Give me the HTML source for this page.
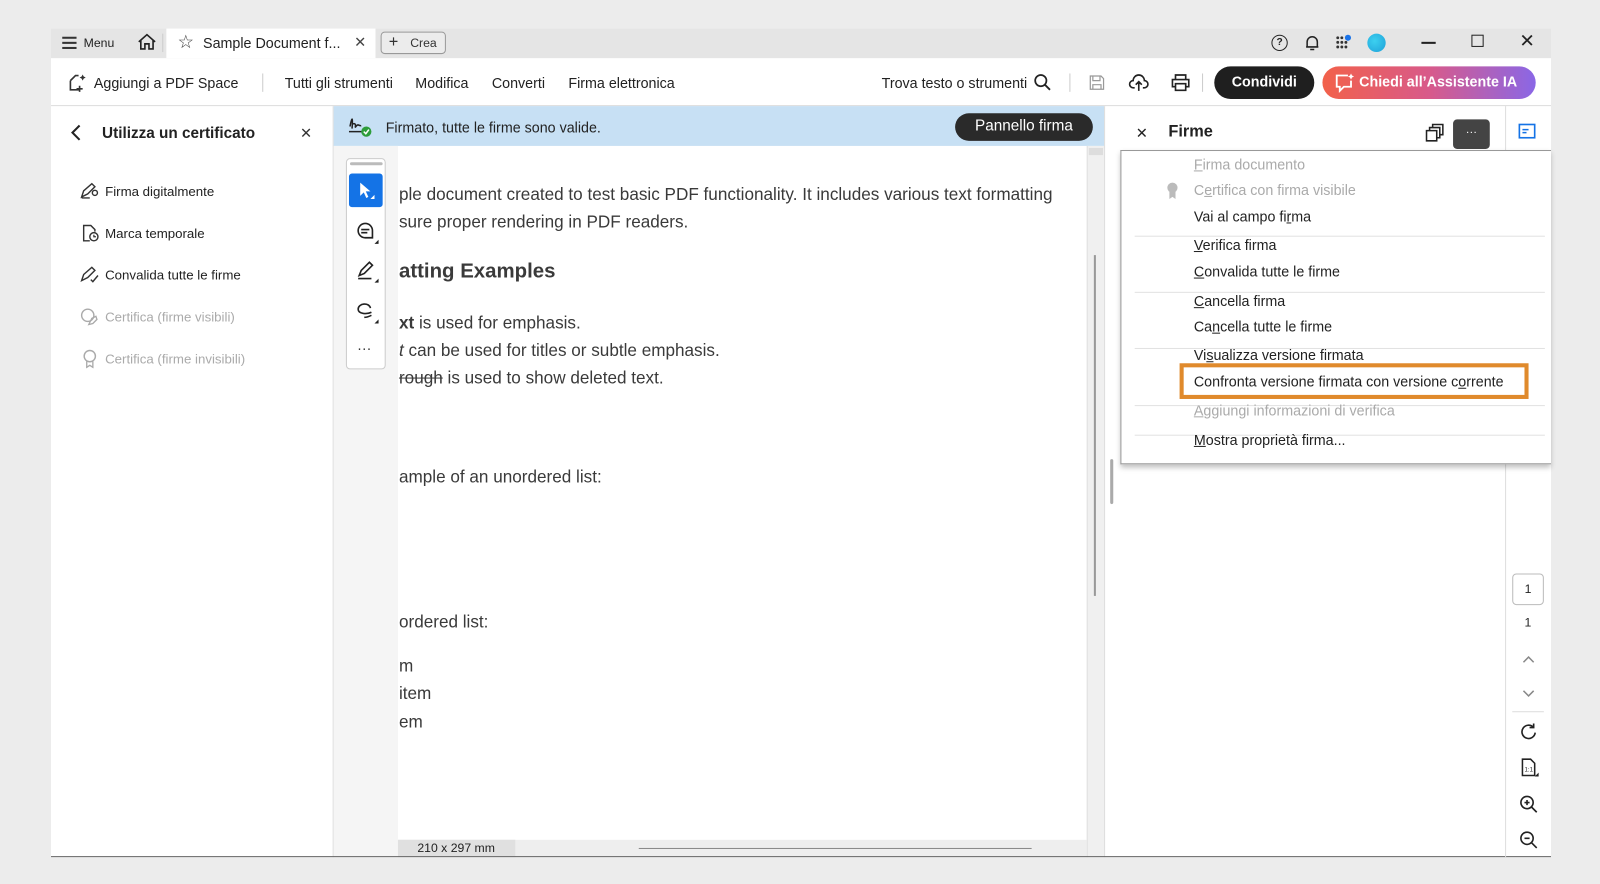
<!DOCTYPE html>
<html><head><meta charset="utf-8"><style>
*{box-sizing:border-box;margin:0;padding:0}
body{width:1600px;height:884px;background:#ececec;font-family:"Liberation Sans",sans-serif;color:#222;position:relative;overflow:hidden}
#root{position:absolute;left:0;top:0;width:1568px;height:866px;transform:scale(1.0204);transform-origin:0 0}
.a{position:absolute}
.t{position:absolute;white-space:nowrap}
svg{position:absolute}
.dt{position:absolute;white-space:nowrap;font-size:16.8px;color:#3a3a3a}
.mi{position:absolute;left:1170px;font-size:14px;color:#222;white-space:nowrap}
.mi.g{color:#aaa}
.sep{position:absolute;left:1112px;width:402px;height:1px;background:#e2e2e2}
.lp{position:absolute;left:103px;font-size:13px;color:#222;white-space:nowrap}
.lp.g{color:#aaa}
</style></head><body><div id="root">
<div class="a" style="left:50px;top:28px;width:1470px;height:812px;background:#fff"></div>
<div class="a" style="left:50px;top:28px;width:1470px;height:29px;background:#e5e5e5"></div>
<div class="a" style="left:163px;top:28px;width:205px;height:29px;background:#fff"></div>
<div class="a" style="left:61px;top:36px;width:14px;height:2px;background:#333;box-shadow:0 5px 0 #333,0 10px 0 #333"></div>
<div class="t" style="left:82px;top:35px;font-size:12px">Menu</div>
<svg style="left:134px;top:32px" width="20" height="18" viewBox="0 0 20 18"><path d="M2 9 L10 2 L18 9 M4 7 V16 H8 V11 H12 V16 H16 V7" fill="none" stroke="#222" stroke-width="1.6"/></svg>
<div class="a" style="left:159px;top:33px;width:1px;height:18px;background:#ccc"></div>
<div class="t" style="left:174px;top:31px;font-size:18px;color:#444">☆</div>
<div class="t" style="left:199px;top:34px;font-size:14px">Sample Document f...</div>
<div class="t" style="left:347px;top:33px;font-size:14px;color:#444">✕</div>
<div class="a" style="left:373px;top:31px;width:64px;height:22px;border:1px solid #999;border-radius:4px;background:#ececec"></div>
<div class="t" style="left:381px;top:33px;font-size:16px;color:#333">+</div>
<div class="t" style="left:402px;top:35px;font-size:12px;color:#333">Crea</div>
<div class="a" style="left:1246px;top:34px;width:16px;height:16px;border:1.6px solid #222;border-radius:50%;font-size:10px;font-weight:bold;text-align:center;line-height:13px">?</div>
<svg style="left:1277px;top:33px" width="18" height="18" viewBox="0 0 18 18"><path d="M4 13 V8 a5 5 0 0 1 10 0 V13 H3 H15 M7 15.5 h4" fill="none" stroke="#222" stroke-width="1.5"/></svg>
<svg style="left:1308px;top:33px" width="18" height="18" viewBox="0 0 18 18"><g fill="#333"><circle cx="3" cy="4" r="1.4"/><circle cx="7" cy="4" r="1.4"/><circle cx="3" cy="8.5" r="1.4"/><circle cx="7" cy="8.5" r="1.4"/><circle cx="11" cy="8.5" r="1.4"/><circle cx="3" cy="13" r="1.4"/><circle cx="7" cy="13" r="1.4"/><circle cx="11" cy="13" r="1.4"/></g><circle cx="13" cy="4" r="3" fill="#1a73e8"/></svg>
<div class="a" style="left:1340px;top:33px;width:18px;height:18px;border-radius:50%;background:radial-gradient(circle at 40% 40%,#3cd0f0,#1fa0d8)"></div>
<div class="a" style="left:1393px;top:41px;width:14px;height:2px;background:#222"></div>
<div class="a" style="left:1442px;top:34px;width:12px;height:12px;border:1.5px solid #222"></div>
<div class="t" style="left:1489px;top:30px;font-size:18px;color:#222">✕</div>
<div class="a" style="left:50px;top:103px;width:1470px;height:1px;background:#ddd"></div>
<svg style="left:66px;top:71px" width="20" height="20" viewBox="0 0 20 20"><path d="M3 8 V17 H12 M3 8 L8 3 H11 M12 13 v6 M9 16 h6" fill="none" stroke="#333" stroke-width="1.6"/><path d="M15 2 l1 2 2 1 -2 1 -1 2 -1-2 -2-1 2-1z" fill="#333"/></svg>
<div class="t" style="left:92px;top:73px;font-size:14px">Aggiungi a PDF Space</div>
<div class="a" style="left:257px;top:72px;width:1px;height:18px;background:#ccc"></div>
<div class="t" style="left:279px;top:73px;font-size:14px">Tutti gli strumenti</div>
<div class="t" style="left:407px;top:73px;font-size:14px">Modifica</div>
<div class="t" style="left:482px;top:73px;font-size:14px">Converti</div>
<div class="t" style="left:557px;top:73px;font-size:14px">Firma elettronica</div>
<div class="t" style="left:864px;top:73px;font-size:14px">Trova testo o strumenti</div>
<svg style="left:1013px;top:72px" width="18" height="18" viewBox="0 0 18 18"><circle cx="7" cy="7" r="5.5" fill="none" stroke="#222" stroke-width="1.7"/><path d="M11 11 L16 16" stroke="#222" stroke-width="1.8"/></svg>
<div class="a" style="left:1048px;top:72px;width:1px;height:18px;background:#ccc"></div>
<svg style="left:1067px;top:73px" width="16" height="16" viewBox="0 0 16 16"><path d="M1.5 1.5 H12 L14.5 4 V14.5 H1.5Z M4 1.5 V6 H11 V1.5 M4 14.5 V10 H12 V14.5" fill="none" stroke="#999" stroke-width="1.2"/></svg>
<svg style="left:1106px;top:71px" width="20" height="20" viewBox="0 0 20 20"><path d="M6 15 H4.5 a3.5 3.5 0 0 1 0-7 a5.5 5.5 0 0 1 11 0 a3.5 3.5 0 0 1 0 7 H14 M10 18 V9 M7 12 L10 9 L13 12" fill="none" stroke="#222" stroke-width="1.6"/></svg>
<svg style="left:1147px;top:72px" width="20" height="18" viewBox="0 0 20 18"><path d="M5 6 V1.5 H15 V6 M5 13 H2 V6 H18 V13 H15 M5 10 H15 V16.5 H5Z" fill="none" stroke="#222" stroke-width="1.6"/></svg>
<div class="a" style="left:1178px;top:72px;width:1px;height:18px;background:#ccc"></div>
<div class="a" style="left:1190px;top:65px;width:98px;height:32px;border-radius:16px;background:#1f1f1f;color:#fff;font-size:14px;font-weight:bold;text-align:center;line-height:31px">Condividi</div>
<div class="a" style="left:1296px;top:65px;width:209px;height:32px;border-radius:16px;background:linear-gradient(90deg,#f2614a,#d85a8a 50%,#8a67e6);color:#fff;font-size:14px;font-weight:bold;line-height:31px;padding-left:36px">Chiedi all’Assistente IA</div>
<svg style="left:1308px;top:71px" width="20" height="20" viewBox="0 0 20 20"><path d="M13 3 H2 V14 H5 V18 L9 14 H16 V8" fill="none" stroke="#fff" stroke-width="1.8"/><path d="M16 1 l1 2 2 1 -2 1 -1 2 -1-2 -2-1 2-1z" fill="#fff"/></svg>
<div class="a" style="left:326px;top:104px;width:1px;height:736px;background:#ddd"></div>
<svg style="left:67px;top:121px" width="14" height="18" viewBox="0 0 14 18"><path d="M11 2 L4 9 L11 16" fill="none" stroke="#222" stroke-width="2"/></svg>
<div class="t" style="left:100px;top:122px;font-size:15px;font-weight:bold">Utilizza un certificato</div>
<div class="t" style="left:294px;top:122px;font-size:14px;color:#333">✕</div>
<svg style="left:78px;top:178px" width="20" height="18" viewBox="0 0 20 18"><path d="M2 15 L4 9 L12 2 L15 5 L8 12 Z M2 16 H10" fill="none" stroke="#333" stroke-width="1.4"/><circle cx="15" cy="11" r="2.5" fill="none" stroke="#333" stroke-width="1.4"/></svg>
<div class="lp" style="top:180px">Firma digitalmente</div>
<svg style="left:80px;top:219px" width="18" height="19" viewBox="0 0 18 19"><path d="M8 17 H2 V2 H9 L13 6 V8" fill="none" stroke="#333" stroke-width="1.4"/><circle cx="12" cy="13" r="4" fill="none" stroke="#333" stroke-width="1.4"/><path d="M12 11 V13 H14" fill="none" stroke="#333" stroke-width="1.2"/></svg>
<div class="lp" style="top:221px">Marca temporale</div>
<svg style="left:78px;top:260px" width="20" height="18" viewBox="0 0 20 18"><path d="M2 15 L4 9 L12 2 L15 5 L8 12 Z M11 14 L13 16 L18 10" fill="none" stroke="#333" stroke-width="1.4"/></svg>
<div class="lp" style="top:262px">Convalida tutte le firme</div>
<svg style="left:78px;top:301px" width="20" height="19" viewBox="0 0 20 19"><circle cx="8" cy="8" r="6" fill="none" stroke="#aaa" stroke-width="1.4"/><path d="M9 17 L12 11 L16 9 L17 12 L13 16Z" fill="none" stroke="#aaa" stroke-width="1.3"/></svg>
<div class="lp g" style="top:303px">Certifica (firme visibili)</div>
<svg style="left:80px;top:342px" width="16" height="19" viewBox="0 0 16 19"><circle cx="8" cy="7" r="5.5" fill="none" stroke="#aaa" stroke-width="1.4"/><path d="M5 12 V18 L8 16 L11 18 V12" fill="none" stroke="#aaa" stroke-width="1.3"/></svg>
<div class="lp g" style="top:344px">Certifica (firme invisibili)</div>
<div class="a" style="left:327px;top:104px;width:755px;height:39px;background:#c7e0f4"></div>
<svg style="left:340px;top:112px" width="26" height="24" viewBox="0 0 26 24"><path d="M3 12 C5 2 6 2 5 14 M5 10 C8 8 9 10 8 13 C11 8 12 12 14 11 M2 17 H16" fill="none" stroke="#222" stroke-width="1.5"/><circle cx="19" cy="17" r="5" fill="#2d9d3a"/><path d="M16.5 17 L18.5 19 L21.5 15" fill="none" stroke="#fff" stroke-width="1.5"/></svg>
<div class="t" style="left:378px;top:117px;font-size:14px;color:#222">Firmato, tutte le firme sono valide.</div>
<div class="a" style="left:936px;top:111px;width:135px;height:27px;border-radius:14px;background:#2a2a2a;color:#fff;font-size:15px;text-align:center;line-height:26px">Pannello firma</div>
<div class="a" style="left:327px;top:143px;width:63px;height:697px;background:#f5f5f5"></div>
<div class="a" style="left:1065px;top:143px;width:17px;height:697px;background:#f0f0f0;border-left:1px solid #e0e0e0"></div>
<div class="a" style="left:1072px;top:250px;width:2px;height:334px;background:#999"></div>
<div class="a" style="left:1067px;top:145px;width:14px;height:7px;background:#ddd"></div>
<div class="a" style="left:1082px;top:104px;width:1px;height:736px;background:#ddd"></div>
<div class="a" style="left:1088px;top:450px;width:3px;height:44px;background:#aaa;border-radius:2px"></div>
<div class="a" style="left:339px;top:155px;width:39px;height:207px;background:#fff;border:1px solid #ccc;border-radius:4px"></div>
<div class="a" style="left:343px;top:159px;width:32px;height:3px;background:#bbb;border-radius:2px"></div>
<div class="a" style="left:342px;top:170px;width:33px;height:33px;background:#1473e6;border-radius:3px"></div>
<svg style="left:350px;top:178px" width="18" height="18" viewBox="0 0 18 18"><path d="M3 1 L3 14 L6.5 10.5 L9 16 L11 15 L8.5 9.5 L13 9.5 Z" fill="#fff"/><path d="M17 13 V17 H13Z" fill="#fff"/></svg>
<svg style="left:348px;top:216px" width="24" height="24" viewBox="0 0 24 24"><path d="M10 3 a7 7 0 1 0 0 14 H17 V10 A7 7 0 0 0 10 3Z M6 9 H14 M6 12 H12" fill="none" stroke="#222" stroke-width="1.6"/><path d="M23 19 V23 H19Z" fill="#222"/></svg>
<svg style="left:348px;top:254px" width="24" height="24" viewBox="0 0 24 24"><path d="M4 16 L6 11 L14 3 L17 6 L9 14 Z M3 19 H16" fill="none" stroke="#222" stroke-width="1.6"/><path d="M23 19 V23 H19Z" fill="#222"/></svg>
<svg style="left:348px;top:294px" width="24" height="24" viewBox="0 0 24 24"><path d="M15 8 C14 2 3 3 3 9 C3 14 12 14 16 12 M9 17 C12 17 14 16 16 15" fill="none" stroke="#222" stroke-width="1.6"/><path d="M23 19 V23 H19Z" fill="#222"/></svg>
<div class="t" style="left:350px;top:333px;font-size:14px;color:#333">···</div>
<div class="dt" style="left:391px;top:181px">ple document created to test basic PDF functionality. It includes various text formatting</div>
<div class="dt" style="left:391px;top:208px">sure proper rendering in PDF readers.</div>
<div class="dt" style="left:391px;top:255px;font-size:20px;font-weight:bold">atting Examples</div>
<div class="dt" style="left:391px;top:307px"><b>xt</b> is used for emphasis.</div>
<div class="dt" style="left:391px;top:334px"><i>t</i> can be used for titles or subtle emphasis.</div>
<div class="dt" style="left:391px;top:361px"><s>rough</s> is used to show deleted text.</div>
<div class="dt" style="left:391px;top:458px">ample of an unordered list:</div>
<div class="dt" style="left:391px;top:600px">ordered list:</div>
<div class="dt" style="left:391px;top:643px">m</div>
<div class="dt" style="left:391px;top:670px"> item</div>
<div class="dt" style="left:391px;top:698px">em</div>
<div class="a" style="left:390px;top:823px;width:675px;height:17px;background:#eee"></div>
<div class="a" style="left:390px;top:823px;width:115px;height:17px;background:#e0e0e0"></div>
<div class="t" style="left:409px;top:824px;font-size:12px;color:#222">210 x 297 mm</div>
<div class="a" style="left:626px;top:831px;width:385px;height:1px;background:#888"></div>
<div class="a" style="left:50px;top:839px;width:1470px;height:1px;background:#666"></div>
<div class="t" style="left:1113px;top:122px;font-size:14px;color:#222">✕</div>
<div class="t" style="left:1145px;top:121px;font-size:16px;font-weight:bold">Firme</div>
<svg style="left:1396px;top:121px" width="20" height="20" viewBox="0 0 20 20"><path d="M2 7 H12 V17 H2Z M5 7 V4 H15 V14 H12 M8 4 V1 H18 V11 H15" fill="none" stroke="#222" stroke-width="1.5"/></svg>
<div class="a" style="left:1424px;top:117px;width:36px;height:29px;background:#444;border-radius:4px;color:#fff;font-size:11px;text-align:center;line-height:26px">···</div>
<div class="a" style="left:1475px;top:104px;width:1px;height:736px;background:#ddd"></div>
<svg style="left:1487px;top:120px" width="20" height="18" viewBox="0 0 20 18"><rect x="2" y="2" width="15" height="13" fill="none" stroke="#1473e6" stroke-width="1.6"/><path d="M5 7 H11 M5 10 H9" stroke="#1473e6" stroke-width="1.5"/></svg>
<div class="a" style="left:1098px;top:147px;width:422px;height:308px;background:#fff;border:1px solid #999;border-right:none;box-shadow:0 3px 5px rgba(0,0,0,.25)"></div>
<div class="mi g" style="top:153px"><u>F</u>irma documento</div>
<svg style="left:1142px;top:178px" width="14" height="18" viewBox="0 0 14 18"><circle cx="7" cy="6" r="5" fill="#bbb"/><path d="M4 10 V17 L7 15 L10 17 V10" fill="#bbb"/></svg>
<div class="mi g" style="top:178px">C<u>e</u>rtifica con firma visibile</div>
<div class="mi" style="top:204px">Vai al campo fi<u>r</u>ma</div>
<div class="sep" style="top:231px"></div>
<div class="mi" style="top:232px"><u>V</u>erifica firma</div>
<div class="mi" style="top:258px"><u>C</u>onvalida tutte le firme</div>
<div class="sep" style="top:286px"></div>
<div class="mi" style="top:287px"><u>C</u>ancella firma</div>
<div class="mi" style="top:312px">Ca<u>n</u>cella tutte le firme</div>
<div class="sep" style="top:341px"></div>
<div class="mi" style="top:340px">Vi<u>s</u>ualizza versione firmata</div>
<div class="a" style="left:1156px;top:356px;width:342px;height:35px;border:4px solid #e08a2c"></div>
<div class="mi" style="top:366px">Confronta versione firmata con versione c<u>o</u>rrente</div>
<div class="sep" style="top:397px"></div>
<div class="mi g" style="top:394px"><u>A</u>ggiungi informazioni di verifica</div>
<div class="sep" style="top:426px"></div>
<div class="mi" style="top:423px"><u>M</u>ostra proprietà firma...</div>
<div class="a" style="left:1482px;top:562px;width:31px;height:31px;border:1px solid #bbb;border-radius:4px;font-size:12px;text-align:center;line-height:29px">1</div>
<div class="t" style="left:1494px;top:603px;font-size:12px">1</div>
<svg style="left:1491px;top:641px" width="14" height="10" viewBox="0 0 14 10"><path d="M2 8 L7 3 L12 8" fill="none" stroke="#888" stroke-width="1.5"/></svg>
<svg style="left:1491px;top:675px" width="14" height="10" viewBox="0 0 14 10"><path d="M2 2 L7 7 L12 2" fill="none" stroke="#888" stroke-width="1.5"/></svg>
<div class="a" style="left:1482px;top:697px;width:31px;height:1px;background:#ddd"></div>
<svg style="left:1489px;top:708px" width="18" height="18" viewBox="0 0 18 18"><path d="M14 5 A6.5 6.5 0 1 0 15.5 10 M14 1 V5 H10" fill="none" stroke="#222" stroke-width="1.6"/></svg>
<svg style="left:1490px;top:742px" width="18" height="20" viewBox="0 0 18 20"><path d="M2 2 H10 L14 6 V18 H2Z" fill="none" stroke="#222" stroke-width="1.5"/><text x="4" y="14" font-size="6" font-family="Liberation Sans" fill="#222">1:1</text><path d="M18 15 V19 H14Z" fill="#222"/></svg>
<svg style="left:1489px;top:779px" width="18" height="18" viewBox="0 0 18 18"><circle cx="7.5" cy="7.5" r="6" fill="none" stroke="#222" stroke-width="1.6"/><path d="M12 12 L17 17 M5 7.5 H10 M7.5 5 V10" stroke="#222" stroke-width="1.6"/></svg>
<svg style="left:1489px;top:814px" width="18" height="18" viewBox="0 0 18 18"><circle cx="7.5" cy="7.5" r="6" fill="none" stroke="#222" stroke-width="1.6"/><path d="M12 12 L17 17 M5 7.5 H10" stroke="#222" stroke-width="1.6"/></svg>
</div></body></html>
